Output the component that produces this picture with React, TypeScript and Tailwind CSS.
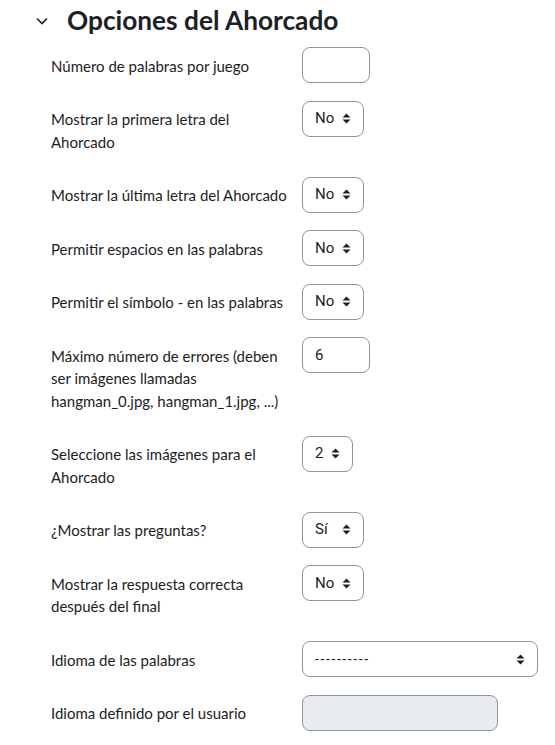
const rows: { label: string; kind: "input" | "select" | "disabled"; value?: string; w: string }[] = [
  { label: "Número de palabras por juego", kind: "input", w: "w-[68px]" },
  { label: "Mostrar la primera letra del Ahorcado", kind: "select", value: "No", w: "w-[62px]" },
  { label: "Mostrar la última letra del Ahorcado", kind: "select", value: "No", w: "w-[62px]" },
  { label: "Permitir espacios en las palabras", kind: "select", value: "No", w: "w-[62px]" },
  { label: "Permitir el símbolo - en las palabras", kind: "select", value: "No", w: "w-[62px]" },
  { label: "Máximo número de errores (deben ser imágenes llamadas hangman_0.jpg, hangman_1.jpg, ...)", kind: "input", value: "6", w: "w-[68px]" },
  { label: "Seleccione las imágenes para el Ahorcado", kind: "select", value: "2", w: "w-[51px]" },
  { label: "¿Mostrar las preguntas?", kind: "select", value: "Sí", w: "w-[62px]" },
  { label: "Mostrar la respuesta correcta después del final", kind: "select", value: "No", w: "w-[62px]" },
  { label: "Idioma de las palabras", kind: "select", value: "----------", w: "w-[236px]" },
  { label: "Idioma definido por el usuario", kind: "disabled", w: "w-[196px]" },
];

const Caret = () => (
  <svg width="9" height="11" viewBox="0 0 9 11" className="shrink-0">
    <path d="M0.5 4.5 L4.5 0.5 L8.5 4.5 Z" fill="#1d2125" />
    <path d="M0.5 6.5 L4.5 10.5 L8.5 6.5 Z" fill="#1d2125" />
  </svg>
);

export default function App() {
  return (
    <div className="bg-white min-h-[745px] text-[#1d2125] font-['Lato','Noto_Sans',sans-serif] pt-[4px]">
      <div className="flex items-center h-[32px] pl-[36px] gap-[19px]">
        <svg width="12" height="8" viewBox="0 0 12 8" className="mt-[1px]">
          <path d="M1 1.5 L6 6.5 L11 1.5" fill="none" stroke="#1d2125" strokeWidth="1.6" />
        </svg>
        <h3 className="text-[26.25px] font-bold leading-none">Opciones del Ahorcado</h3>
      </div>
      <div className="pl-[51px] pt-[11px]">
        {rows.map((r, i) => (
          <div key={i} className="flex mb-4">
            <label className="w-[240px] shrink-0 text-[15px] leading-[22.5px] py-[7.5px]">{r.label}</label>
            <div className="ml-[11px]">
              {r.kind === "select" ? (
                <div className={`${r.w} h-[36px] border border-[#8f959e] rounded-[8px] flex items-center justify-between pl-[12px] pr-[12px] font-['Roboto',sans-serif] text-[15px]`}>
                  <span className={r.value === "----------" ? "tracking-[1.6px] text-[14px]" : ""}>{r.value}</span>
                  <Caret />
                </div>
              ) : r.kind === "input" ? (
                <div className={`${r.w} h-[36px] border border-[#8f959e] rounded-[8px] flex items-center pl-[12px] font-['Roboto',sans-serif] text-[15px]`}>
                  {r.value}
                </div>
              ) : (
                <div className={`${r.w} h-[36px] border border-[#8f959e] rounded-[8px] bg-[#e9ecef]`} />
              )}
            </div>
          </div>
        ))}
      </div>
    </div>
  );
}
